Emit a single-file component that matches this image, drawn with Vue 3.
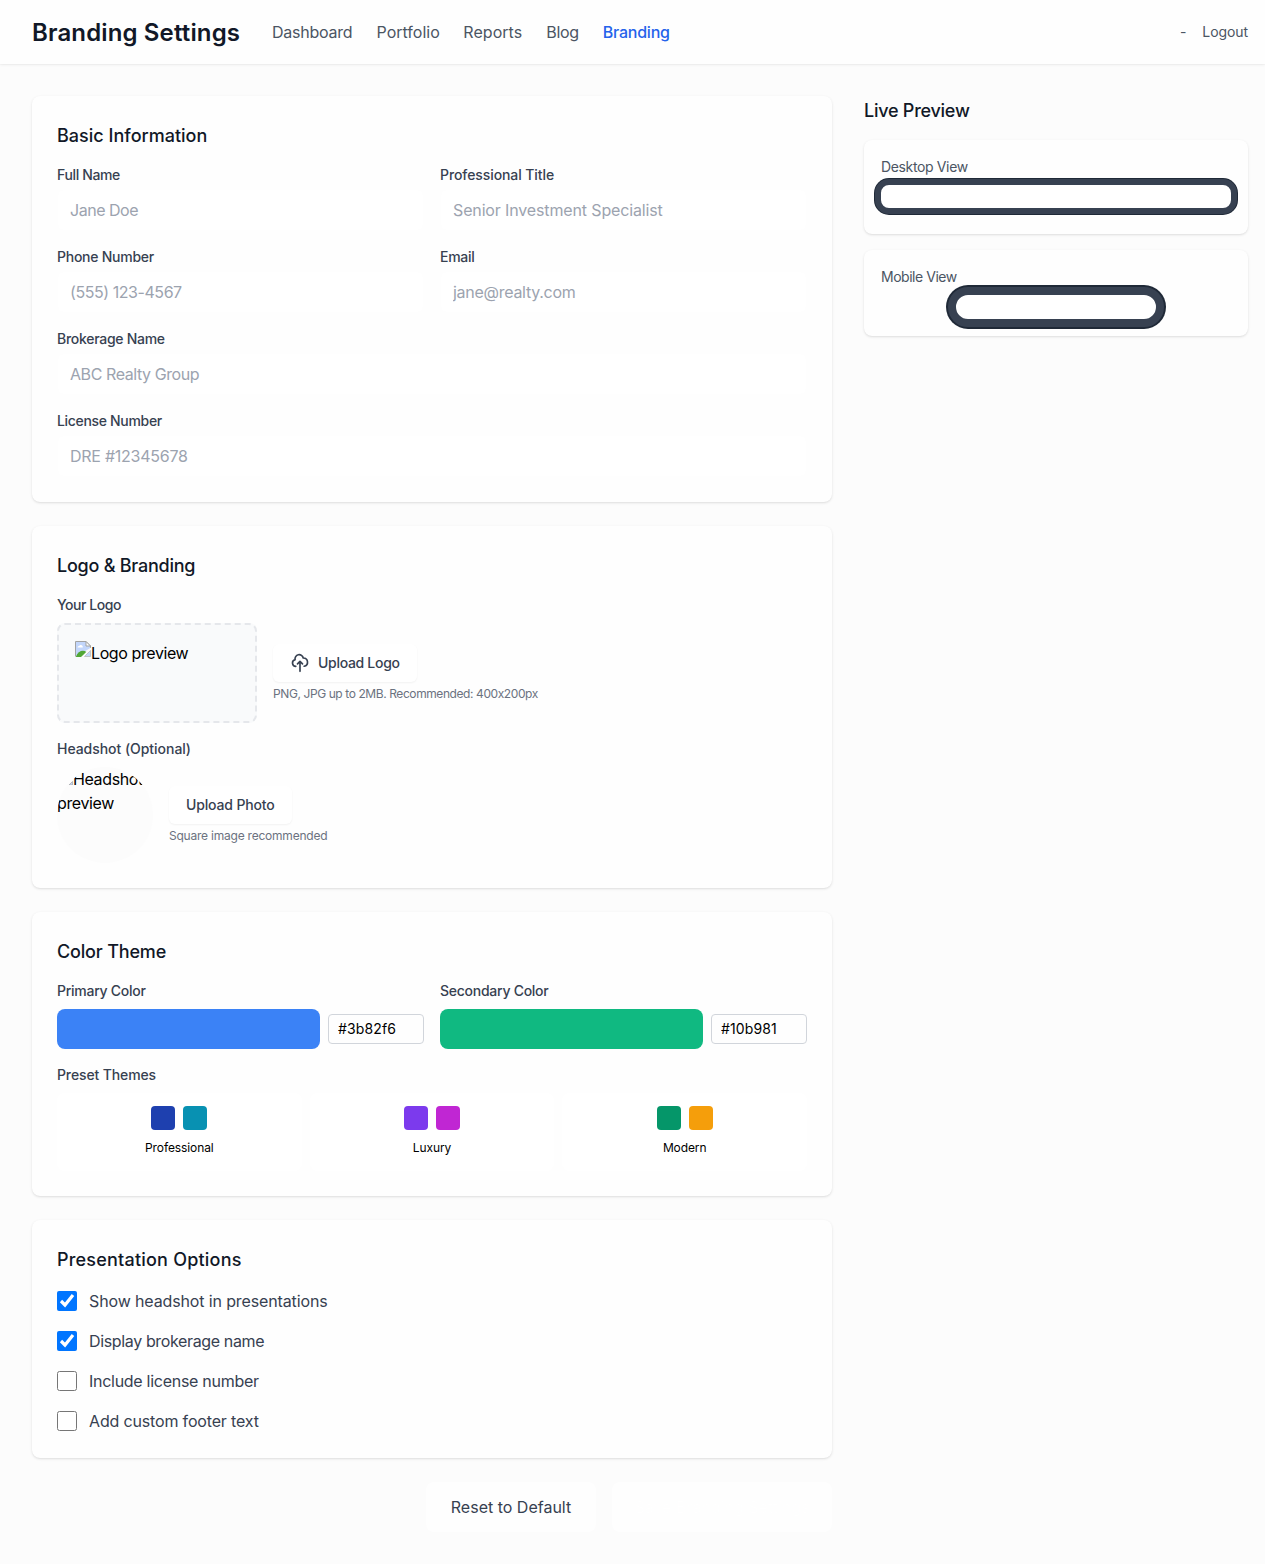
<script setup>
import { reactive } from 'vue'

// `track` is the letter spacing of a caption, in pixels
const nav = [
  { label: 'Dashboard', cls: 'n1', track: -0.25 },
  { label: 'Portfolio', cls: 'n2', track: 0 },
  { label: 'Reports', cls: 'n3', track: 0.05 },
  { label: 'Blog', cls: 'n4', track: -0.35 },
  { label: 'Branding', cls: 'active', track: -0.23 },
]

const fields = [
  { label: 'Full Name', track: -0.36, placeholder: 'Jane Doe', inputTrack: -0.48 },
  { label: 'Professional Title', track: -0.09, placeholder: 'Senior Investment Specialist', inputTrack: -0.14 },
  { label: 'Phone Number', track: -0.25, placeholder: '(555) 123-4567', inputTrack: -0.44 },
  { label: 'Email', track: -0.26, placeholder: 'jane@realty.com', inputTrack: -0.28 },
  { label: 'Brokerage Name', track: -0.28, placeholder: 'ABC Realty Group', inputTrack: -0.42, wide: true },
  { label: 'License Number', track: -0.32, placeholder: 'DRE #12345678', inputTrack: -0.25, wide: true },
]

const colors = reactive([
  { label: 'Primary Color', value: '#3b82f6' },
  { label: 'Secondary Color', value: '#10b981' },
])

const presets = [
  { name: 'Professional', colors: ['#1e40af', '#0891b2'] },
  { name: 'Luxury', colors: ['#7c3aed', '#c026d3'] },
  { name: 'Modern', colors: ['#059669', '#f59e0b'] },
]

const options = reactive([
  { label: 'Show headshot in presentations', track: -0.13, on: true },
  { label: 'Display brokerage name', track: -0.36, on: true },
  { label: 'Include license number', track: -0.28, on: false },
  { label: 'Add custom footer text', track: -0.16, on: false },
])

const spacing = (px) => ({ letterSpacing: `${px}px` })
</script>

<template>
  <div class="page">
    <header class="topbar">
      <h1>Branding Settings</h1>
      <nav>
        <a v-for="n in nav" :key="n.label" :class="n.cls" :style="spacing(n.track)">{{ n.label }}</a>
      </nav>
      <div class="account"><span>-</span><a>Logout</a></div>
    </header>

    <main>
      <div class="forms">
        <section class="card">
          <h2 class="t-basic">Basic Information</h2>
          <div class="grid">
            <div v-for="f in fields" :key="f.label" class="field" :class="{ wide: f.wide }">
              <label :style="spacing(f.track)">{{ f.label }}</label>
              <input type="text" :placeholder="f.placeholder" :style="spacing(f.inputTrack)" />
            </div>
          </div>
        </section>

        <section class="card">
          <h2 class="t-logo">Logo &amp; Branding</h2>
          <label class="l-logo">Your Logo</label>
          <div class="upload">
            <div class="logo-box">
              <svg class="broken" viewBox="0 0 16 16" width="16" height="16">
                <path d="M0.5 15.5V0.5H11L15.5 5V7" fill="#c3d6fb" stroke="#a3a3a3" />
                <path d="M11 0.5V5H15.5Z" fill="#fff" stroke="#a3a3a3" />
                <path d="M2.5 6.5a1.5 1.5 0 0 1 1.6-1.5 2 2 0 0 1 3.6.5 1 1 0 0 1 0 1z" fill="#fff" />
                <path d="M1 15.500C3 10 8 8.500 11.500 11L7 16H1Z" fill="#52a736" />
                <path d="M6 16L16 6.500V8.500L8.500 16Z" fill="#f9fafb" />
                <path d="M9.500 15.500H15.500V9.500Z" fill="#c3d6fb" stroke="#b5b5b5" stroke-width=".7" />
              </svg><span>Logo preview</span>
            </div>
            <div class="actions">
              <button class="small">
                <svg viewBox="0 0 24 24" width="20" height="20" fill="none" stroke="currentColor" stroke-width="2" stroke-linecap="round" stroke-linejoin="round">
                  <path d="M7 16a4 4 0 01-.88-7.903A5 5 0 1115.900 6L16 6a5 5 0 011 9.900M15 13l-3-3m0 0l-3 3m3-3v12" />
                </svg>
                <span>Upload Logo</span>
              </button>
              <p class="hint hint-logo">PNG, JPG up to 2MB. Recommended: 400x200px</p>
            </div>
          </div>
          <label class="next l-headshot">Headshot (Optional)</label>
          <div class="upload">
            <div class="headshot">
              <svg class="broken" viewBox="0 0 16 16" width="16" height="16">
                <path d="M12 16H15.500V12.500Z" fill="#c3d6fb" stroke="#a3a3a3" stroke-width=".7" />
              </svg><span>Headshot preview</span>
            </div>
            <div class="actions">
              <button class="small photo"><span>Upload Photo</span></button>
              <p class="hint">Square image recommended</p>
            </div>
          </div>
        </section>

        <section class="card">
          <h2 class="t-color">Color Theme</h2>
          <div class="grid">
            <div v-for="c in colors" :key="c.label">
              <label>{{ c.label }}</label>
              <div class="color-row">
                <div class="swatch" :style="{ background: c.value }"></div>
                <input class="hex" type="text" v-model="c.value" />
              </div>
            </div>
          </div>
          <label class="next l-presets">Preset Themes</label>
          <div class="presets">
            <button v-for="p in presets" :key="p.name" class="preset">
              <div class="chips"><i v-for="c in p.colors" :key="c" :style="{ background: c }"></i></div>
              <span>{{ p.name }}</span>
            </button>
          </div>
        </section>

        <section class="card">
          <h2 class="t-options">Presentation Options</h2>
          <div class="options">
            <label v-for="o in options" :key="o.label" class="option" :style="spacing(o.track)">
              <input type="checkbox" v-model="o.on" />
              <span>{{ o.label }}</span>
            </label>
          </div>
        </section>

        <div class="footer">
          <button class="large">Reset to Default</button>
          <button class="large save">Save Branding Settings</button>
        </div>
      </div>

      <aside>
        <h2 class="t-preview">Live Preview</h2>
        <div class="preview">
          <p>Desktop View</p>
          <div class="desktop"></div>
        </div>
        <div class="preview mobile-card">
          <p>Mobile View</p>
          <div class="mobile"></div>
        </div>
      </aside>
    </main>
  </div>
</template>

<style>
body {
  margin: 0;
  background: #fcfcfc;
}
</style>

<style scoped>
* {
  box-sizing: border-box;
}
.page {
  width: 1265px;
  height: 1564px;
  background: #fcfcfc;
  font-family: Inter, sans-serif;
  font-size: 16px;
  line-height: 24px;
  color: #000;
}
h1, h2, p {
  margin: 0;
}
button, input {
  font: inherit;
  letter-spacing: inherit;
}
.topbar {
  height: 64px;
  padding: 0 17px 0 32px;
  display: flex;
  align-items: center;
  background: #fefefe;
  box-shadow: 0 1px 3px rgba(0, 0, 0, 0.06), 0 1px 1px rgba(0, 0, 0, 0.02);
}
h1 {
  width: 208px;
  margin-right: 32px;
  padding-top: 2px;
  font-size: 24px;
  line-height: 32px;
  font-weight: 600;
  letter-spacing: 0.14px;
  color: #111827;
  white-space: nowrap;
}
nav {
  display: flex;
  gap: 24px;
  color: #4b5563;
  white-space: nowrap;
}
.n1 { width: 80.5px; }
.n2 { width: 62.8px; }
.n3 { width: 59px; }
.n4 { width: 32.5px; }
.active {
  color: #2563eb;
  font-weight: 500;
}
.account {
  margin-left: auto;
  display: flex;
  gap: 16px;
  font-size: 14px;
  line-height: 20px;
  letter-spacing: -0.08px;
  color: #4b5563;
}
main {
  display: flex;
  gap: 32px;
  padding: 32px 17px 32px 32px;
}
.forms {
  width: 800px;
  display: flex;
  flex-direction: column;
  gap: 24px;
}
aside {
  width: 384px;
}
.card {
  padding: 25px;
  border-radius: 8px;
  background: #fefefe;
  box-shadow: 0 1px 3px rgba(0, 0, 0, 0.1), 0 1px 2px -1px rgba(0, 0, 0, 0.1);
}
h2 {
  height: 28px;
  margin-bottom: 16px;
  font-size: 18px;
  line-height: 30px;
  font-weight: 500;
  color: #111827;
}
.t-basic { letter-spacing: 0.01px; }
.t-logo { letter-spacing: -0.24px; }
.t-color { letter-spacing: -0.17px; }
.t-options { letter-spacing: 0.21px; }
.t-preview { letter-spacing: -0.25px; }
label {
  display: block;
  font-size: 14px;
  line-height: 20px;
  font-weight: 500;
  letter-spacing: -0.26px;
  color: #374151;
}
.l-logo { letter-spacing: -0.45px; }
.l-headshot { letter-spacing: -0.04px; }
.l-presets { letter-spacing: -0.12px; }
.next {
  margin-top: 16px;
}
.grid {
  display: grid;
  grid-template-columns: 1fr 1fr;
  gap: 16px;
}
.wide {
  grid-column: span 2;
}
.field input {
  display: block;
  width: 100%;
  height: 42px;
  margin-top: 4px;
  padding: 8px 12px;
  border: 1px solid #fefefe;
  border-radius: 6px;
  background: #fff;
}
.field input::placeholder {
  color: #9ca3af;
}
.upload {
  display: flex;
  align-items: center;
  gap: 16px;
  margin-top: 8px;
}
.logo-box {
  display: flex;
  align-items: flex-start;
  width: 200px;
  height: 100px;
  padding: 16px;
  border: 2px dashed #e5e7eb;
  border-radius: 8px;
  background: #f9fafb;
  letter-spacing: -0.4px;
}
.headshot {
  width: 96px;
  height: 96px;
  border-radius: 50%;
  overflow: hidden;
  background: #fcfcfc;
  letter-spacing: -0.38px;
}
.small {
  display: flex;
  align-items: center;
  gap: 8px;
  height: 38px;
  padding: 0 17px;
  border: 0;
  border-radius: 6px;
  background: #fff;
  box-shadow: 0 1px 2px rgba(0, 0, 0, 0.05);
  font-size: 14px;
  line-height: 20px;
  font-weight: 500;
  letter-spacing: -0.3px;
  color: #374151;
}
.photo {
  letter-spacing: -0.15px;
}
.actions {
  display: flex;
  flex-direction: column;
  align-items: flex-start;
  gap: 4px;
}
.hint {
  font-size: 12px;
  line-height: 16px;
  letter-spacing: -0.22px;
  color: #6b7280;
}
.hint-logo {
  letter-spacing: -0.41px;
}
.color-row {
  display: flex;
  align-items: center;
  gap: 8px;
  margin-top: 8px;
}
.swatch {
  flex: 1;
  height: 40px;
  border-radius: 8px;
}
.hex {
  width: 96px;
  height: 30px;
  padding: 3px 8px 5px 9px;
  border: 1px solid #d1d5db;
  border-radius: 4px;
  background: #fefefe;
  font-size: 14px;
  line-height: 20px;
  letter-spacing: 0.12px;
}
.presets {
  display: grid;
  grid-template-columns: repeat(3, 1fr);
  gap: 8px;
  margin-top: 8px;
}
.preset {
  height: 78px;
  padding: 13px;
  border: 0;
  border-radius: 8px;
  background: #fff;
  font-size: 12px;
  line-height: 20px;
  letter-spacing: -0.1px;
  color: #000;
}
.chips {
  display: flex;
  justify-content: center;
  gap: 8px;
  margin-bottom: 8px;
}
.chips i {
  width: 24px;
  height: 24px;
  border-radius: 4px;
}
.preset span {
  display: block;
}
.options {
  display: flex;
  flex-direction: column;
  gap: 16px;
}
.option {
  display: flex;
  align-items: center;
  gap: 12px;
  font-size: 16px;
  line-height: 24px;
  font-weight: 400;
}
.option input {
  width: 20px;
  height: 20px;
  margin: 0;
}
.footer {
  display: flex;
  justify-content: flex-end;
  gap: 16px;
}
.large {
  width: 170px;
  height: 50px;
  padding: 0;
  border: 0;
  border-radius: 8px;
  background: #fefefe;
  color: #374151;
  white-space: nowrap;
}
.save {
  width: 220px;
  color: #fff;
}
.preview {
  height: 94px;
  padding: 17px;
  border-radius: 8px;
  background: #fefefe;
  box-shadow: 0 1px 3px rgba(0, 0, 0, 0.1), 0 1px 2px -1px rgba(0, 0, 0, 0.1);
}
.mobile-card {
  height: 86px;
  margin-top: 16px;
}
.preview p {
  font-size: 14px;
  line-height: 20px;
  letter-spacing: -0.36px;
  color: #4b5563;
}
.mobile-card p {
  letter-spacing: -0.47px;
}
.desktop {
  height: 35px;
  margin: 2px -6px 0;
  border: 6px solid #374151;
  border-radius: 14px;
  background: #fff;
  box-shadow: 0 0 0 1px #1f2937;
}
.mobile {
  width: 216px;
  height: 40px;
  margin: 0 auto;
  border: 8px solid #374151;
  border-radius: 20px;
  background: #fff;
  box-shadow: 0 0 0 2px #1f2937;
}
</style>
